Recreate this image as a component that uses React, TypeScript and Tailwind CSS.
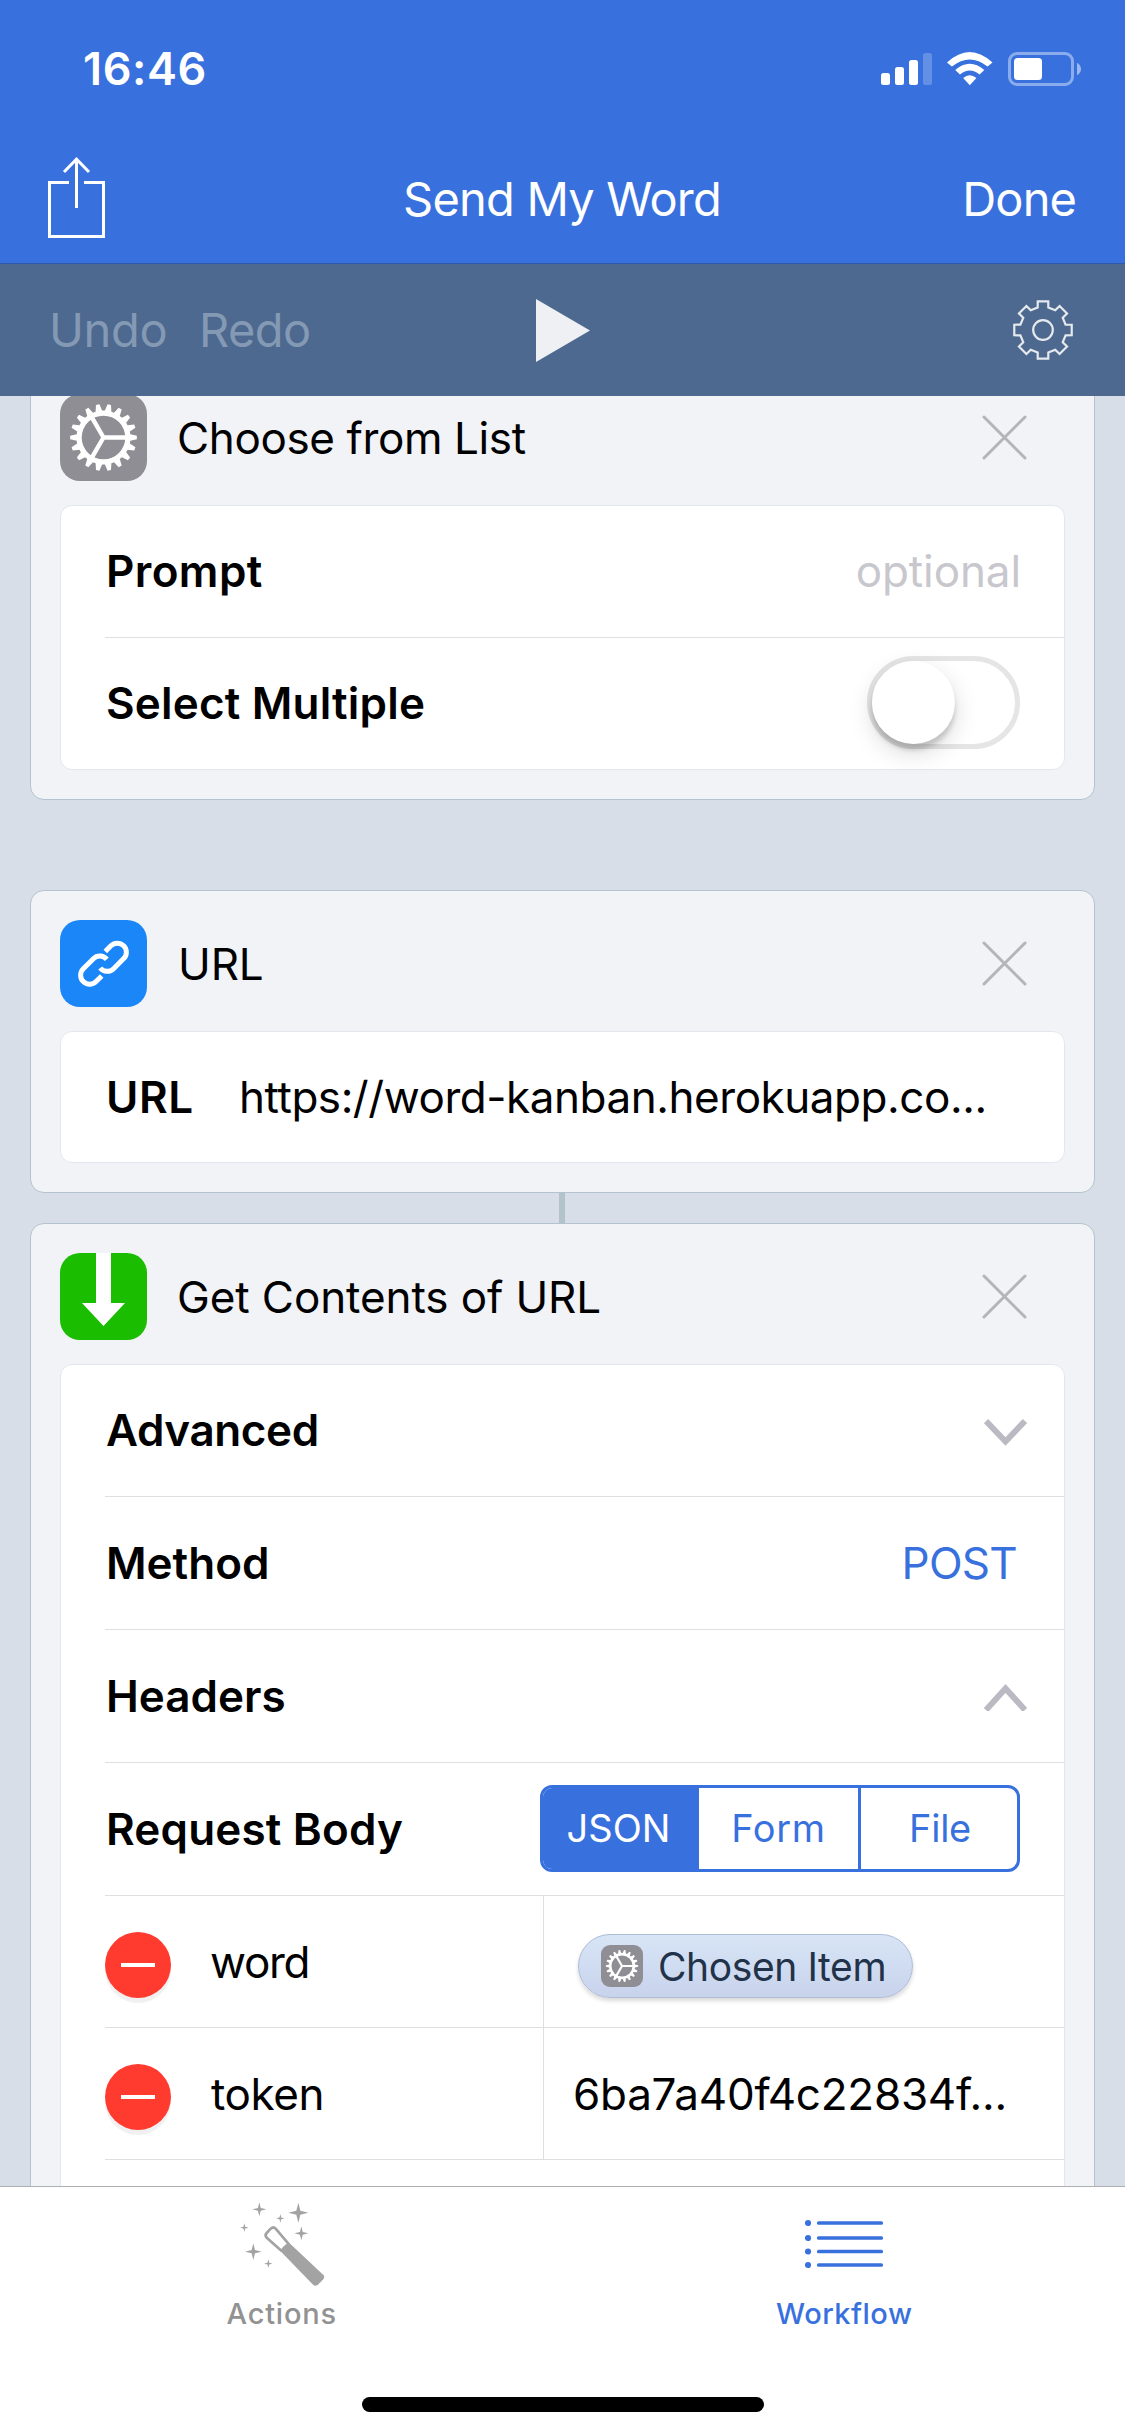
import type { ReactNode } from 'react';

const rad = (deg: number) => (deg * Math.PI) / 180;
const at = (r: number, deg: number) => `${(r * Math.cos(rad(deg))).toFixed(2)} ${(r * Math.sin(rad(deg))).toFixed(2)}`;

/** Closed outline of a cog centred on 0,0: body radius, tip radius, half angles of tooth base and tip. */
function cogPath(teeth: number, body: number, tip: number, baseHalf: number, tipHalf: number) {
  const step = 360 / teeth;
  let d = '';
  for (let i = 0; i < teeth; i++) {
    const a = i * step;
    d += `${i === 0 ? 'M' : 'L'}${at(body, a - baseHalf)}L${at(tip, a - tipHalf)}L${at(tip, a + tipHalf)}L${at(body, a + baseHalf)}`;
  }
  return d + 'Z';
}

const OUTLINE_COG = cogPath(8, 23.2, 29.2, 13.2, 10.4);
const SOLID_COG = cogPath(18, 27, 33.4, 7, 3);

function CogGlyph({ className }: { className: string }) {
  return (
    <svg viewBox="-43.5 -43.5 87 87" className={className}>
      <path d={SOLID_COG} fill="#fff" />
      <circle r="21.8" fill="#8f8e94" />
      <path d="M0 0H23M0 0L-11.5 -19.9M0 0L-11.5 19.9" stroke="#fff" strokeWidth="4.4" fill="none" />
    </svg>
  );
}

function StatusIcons() {
  return (
    <svg width="204" height="40" viewBox="879 49 204 40">
      <g fill="#fff">
        <rect x="881" y="73" width="9" height="12" rx="2.5" />
        <rect x="895" y="67" width="9" height="18" rx="2.5" />
        <rect x="909" y="60" width="9" height="25" rx="2.5" />
        <rect x="923" y="53" width="9" height="32" rx="2.5" opacity=".22" />
        <path d="M947 62.5Q969.700 41.500 992.500 62.500L987.600 66.600Q969.700 52.500 951.900 66.600Z" />
        <path d="M955.200 70Q969.700 57.500 984.300 70L979.600 74.600Q969.700 66.500 960 74.600Z" />
        <path d="M963.200 78Q969.700 72.600 976.400 78L969.800 85.300Z" />
        <rect x="1014" y="58" width="28" height="22" rx="3.500" />
        <path d="M1077 62.700Q1081 65 1081 69T1077 75.300Z" opacity=".5" />
      </g>
      <rect x="1009.500" y="53.500" width="63" height="31" rx="7.500" fill="none" stroke="#fff" strokeWidth="3" opacity=".42" />
    </svg>
  );
}

function Tile({ className, children }: { className: string; children: ReactNode }) {
  return <div className={`size-[87px] shrink-0 overflow-hidden rounded-[20px] ${className}`}>{children}</div>;
}

function Card({ tile, title, titleClass, children, className = '' }: { tile: ReactNode; title: string; titleClass: string; children: ReactNode; className?: string }) {
  return (
    <section className={`mx-[30px] rounded-[14px] border border-[#b4c3cf] bg-[#f1f3f7] px-[29px] py-[29px] ${className}`}>
      <header className="flex items-center pr-[38px]">
        {tile}
        <h2 className={`ml-[30px] flex-1 ${titleClass}`}>{title}</h2>
        <svg width="45" height="45" viewBox="0 0 45 45" fill="none" stroke="#b3b5b8" strokeWidth="3" strokeLinecap="round">
          <path d="M2 2L43 43M43 2L2 43" />
        </svg>
      </header>
      <div className="mt-6 rounded-xl border border-[#e2e7ef] bg-white">{children}</div>
    </section>
  );
}

function Row({ children, className }: { children: ReactNode; className: string }) {
  return <div className={`ml-[44px] flex items-center border-[#dedfe1] ${className}`}>{children}</div>;
}

function Chevron({ d }: { d: string }) {
  return (
    <svg width="44" height="30" viewBox="0 0 44 30" className="mr-[36px]" fill="none" stroke="#bbbac3" strokeWidth="6">
      <path d={d} />
    </svg>
  );
}

function Pair({ name, nameClass, children, className }: { name: string; nameClass: string; children: ReactNode; className: string }) {
  return (
    <Row className={`border-b ${className}`}>
      <div className="flex h-full w-[439px] items-center border-r border-[#dedfe1]">
        <div className="mt-[7px] flex size-[66px] items-center justify-center rounded-full bg-[#ff3b30] shadow-[0_5px_1px_rgba(0,0,0,0.06)]">
          <div className="h-1 w-[34px] bg-white" />
        </div>
        <span className={nameClass}>{name}</span>
      </div>
      {children}
    </Row>
  );
}

/** Four-pointed sparkle. */
function Spark({ x, y, r }: { x: number; y: number; r: number }) {
  const k = r * 0.2;
  return <path d={`M${x} ${y - r}L${x + k} ${y - k}L${x + r} ${y}L${x + k} ${y + k}L${x} ${y + r}L${x - k} ${y + k}L${x - r} ${y}L${x - k} ${y - k}Z`} />;
}

function WandIcon() {
  return (
    <svg width="88" height="86" viewBox="111 93 264 258" fill="#a3a3a3">
      <Spark x={295} y={128} r={30} />
      <Spark x={178} y={118} r={21} />
      <Spark x={304} y={190} r={21} />
      <Spark x={160} y={245} r={25} />
      <Spark x={241} y={145} r={13} />
      <Spark x={133} y={173} r={13} />
      <Spark x={205} y={281} r={13} />
      <path d="M267 223L227 176Q220 169 212 176L200 189Q193 197 201 204L245 243" fill="none" stroke="#a3a3a3" strokeWidth="8" />
      <path d="M268 219L371 316Q375 321 370 328L353 345Q346 350 340 345L241 243Q248 226 268 219Z" />
    </svg>
  );
}

function ListIcon() {
  return (
    <svg width="78" height="86" viewBox="0 -19 78 86">
      {[3, 18, 31.5, 45].map((y) => (
        <g key={y} fill="#3871de">
          <circle cx="3" cy={y} r="3.100" />
          <rect x="12" y={y - 1.8} width="66" height="3.600" rx="1.500" />
        </g>
      ))}
    </svg>
  );
}

export default function App() {
  return (
    <div className="flex h-[2436px] w-[1125px] flex-col overflow-hidden bg-white font-['Inter',sans-serif] text-[44px] leading-[56px] whitespace-nowrap text-black">
      <div className="h-[264px] shrink-0 border-b border-[#2f5aa9] bg-[#3871de] text-white">
        <div className="flex h-[132px] items-center justify-between pt-[5px] pr-[42px] pl-[83px]">
          <span className="text-[45px] font-semibold tracking-[0.6px]">16:46</span>
          <StatusIcons />
        </div>
        <div className="grid h-[131px] grid-cols-[1fr_auto_1fr] items-center pr-[49px] pl-12 text-[47px]">
          <svg width="57" height="81" viewBox="0 0 57 81" fill="none" stroke="#fff" strokeWidth="3">
            <path d="M21 25.500H1.500V79.500H55.500V25.500H36M28.500 51V2M16 15L28.500 2.200L41 15" />
          </svg>
          <h1 className="pt-[3px] tracking-[-0.8px]">Send My Word</h1>
          <span className="justify-self-end pt-[3px] tracking-[-0.9px]">Done</span>
        </div>
      </div>

      <div className="grid h-[132px] shrink-0 grid-cols-[1fr_auto_1fr] items-center bg-[#4d698f] pr-[51px] pl-[49px] text-[47px] text-[#8499b4]">
        <div className="flex">
          <span className="w-[150px] tracking-[-0.35px]">Undo</span>
          <span className="tracking-[-0.55px]">Redo</span>
        </div>
        <svg width="54" height="63" viewBox="0 0 54 63" className="ml-[3px]" fill="#eef0f4">
          <path d="M0 0L54 31.500L0 63Z" />
        </svg>
        <svg width="62" height="62" viewBox="-31 -31 62 62" className="justify-self-end" fill="none" stroke="#e6e9ee" strokeWidth="2.2">
          <path d={OUTLINE_COG} />
          <circle r="9.800" />
        </svg>
      </div>

      <main className="min-h-0 flex-1 overflow-hidden bg-[#d7dee8]">
        <Card
          className="-mt-8"
          title="Choose from List"
          titleClass="tracking-[-0.38px]"
          tile={<Tile className="bg-[#8f8e94]"><CogGlyph className="size-[87px]" /></Tile>}
        >
          <Row className="h-[132px] justify-between border-b pb-0.5">
            <span className="pl-px font-semibold tracking-[0.4px]">Prompt</span>
            <span className="mr-[43px] tracking-[-0.1px] text-[#c7c7cd]">optional</span>
          </Row>
          <Row className="h-[131px] justify-between pb-0.5">
            <span className="pl-px font-semibold tracking-[0.2px]">Select Multiple</span>
            <div className="mr-[44px] h-[93px] w-[153px] rounded-full border-[5px] border-[#e5e5e5]">
              <div className="size-[83px] rounded-full bg-white shadow-[0_9px_24px_rgba(0,0,0,0.15),0_6px_5px_rgba(0,0,0,0.16)]" />
            </div>
          </Row>
        </Card>

        <Card
          className="mt-[90px]"
          title="URL"
          titleClass="pl-px tracking-[-0.1px]"
          tile={
            <Tile className="bg-[#1b86f8]">
              <svg width="87" height="87" viewBox="0 0 87 87" fill="none" stroke="#fff" strokeWidth="5">
                <path d="M45.300 31.400L50.900 25.800A9 9 0 0 1 63.700 38.600L53.600 48.700A9 9 0 0 1 40.200 48" />
                <path d="M45.300 31.400L50.900 25.800A9 9 0 0 1 63.700 38.600L53.600 48.700A9 9 0 0 1 40.200 48" transform="rotate(180 43.500 43.700)" />
              </svg>
            </Tile>
          }
        >
          <Row className="h-[130px]">
            <span className="w-[134px] pl-px font-semibold tracking-[0.6px]">URL</span>
            <span className="tracking-[-0.45px]">https://word-kanban.herokuapp.co...</span>
          </Row>
        </Card>

        <div className="ml-[559px] h-[30px] w-1.5 bg-[#b3c3cc]" />

        <Card
          title="Get Contents of URL"
          titleClass="tracking-[-0.1px]"
          tile={
            <Tile className="bg-[#1abd00]">
              <svg width="87" height="87" viewBox="0 0 87 87" fill="#fff">
                <path d="M36 0H51V50H65L43.500 73L22 50H36Z" />
              </svg>
            </Tile>
          }
        >
          <Row className="h-[132px] justify-between border-b font-semibold tracking-[-0.4px]">
            <span className="pb-0.5 pl-px">Advanced</span>
            <Chevron d="M2 5L21.500 25.500L41 5" />
          </Row>
          <Row className="h-[133px] justify-between border-b">
            <span className="pl-px font-semibold">Method</span>
            <span className="mr-[47px] tracking-[-0.75px] text-[#3871de]">POST</span>
          </Row>
          <Row className="h-[133px] justify-between border-b font-semibold">
            <span className="pl-px">Headers</span>
            <Chevron d="M2 29L21.500 7.500L41 29" />
          </Row>
          <Row className="h-[133px] justify-between border-b pb-px">
            <span className="pl-px font-semibold tracking-[0.18px]">Request Body</span>
            <div className="mr-[44px] grid h-[87px] w-[480px] grid-cols-[156px_159px_159px] overflow-hidden rounded-xl border-[3px] border-[#3871de] text-center text-[38px] leading-[80px] text-[#3871de]">
              <span className="bg-[#3871de] pr-[5px] text-white">JSON</span>
              <span className="tracking-[0.6px]">Form</span>
              <span className="border-l-[3px] border-[#3871de] pl-[2px] tracking-[-0.3px]">File</span>
            </div>
          </Row>
          <Pair name="word" nameClass="ml-[39px] tracking-[-1.3px]" className="h-[132px]">
            <div className="mt-2 ml-[34px] flex h-16 w-[335px] items-center rounded-full border border-[#aebcd6] bg-linear-to-b from-[#d8e5f6] to-[#c8d3ec] pl-[22px] shadow-[0_3px_4px_rgba(0,0,0,0.15)]">
              <div className="size-[42px] shrink-0 rounded-[9px] bg-[#8f8e94]">
                <CogGlyph className="size-[42px]" />
              </div>
              <span className="ml-[15px] pt-[3px] text-[39px] tracking-[-0.4px] text-[#223349]">Chosen Item</span>
            </div>
          </Pair>
          <Pair name="token" nameClass="ml-10 tracking-[-0.4px]" className="h-[132px]">
            <span className="ml-[29px] tracking-[-0.25px]">6ba7a40f4c22834f...</span>
          </Pair>
          <div className="h-[132px]" />
        </Card>
      </main>

      <nav className="h-[250px] shrink-0 border-t border-[#adafb3] bg-white text-[29px] leading-9 font-medium">
        <div className="grid h-[210px] grid-cols-2 pt-[14px]">
          <div className="flex flex-col items-center gap-[9px] text-[#929292]">
            <WandIcon />
            <span className="pl-px tracking-[0.8px]">Actions</span>
          </div>
          <div className="flex flex-col items-center gap-[9px] text-[#3871de]">
            <ListIcon />
            <span className="pl-px tracking-[0.5px]">Workflow</span>
          </div>
        </div>
        <div className="mx-auto h-[15px] w-[402px] rounded-full bg-black" />
      </nav>
    </div>
  );
}
